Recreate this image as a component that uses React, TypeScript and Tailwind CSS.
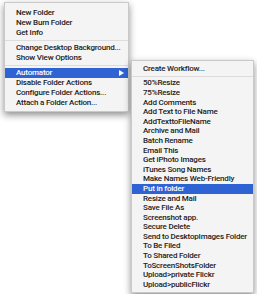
import React from "react";

type Item = { label?: string; sep?: boolean; active?: boolean; arrow?: boolean };

const mainItems: Item[] = [
  { label: "New Folder" },
  { label: "New Burn Folder" },
  { label: "Get Info" },
  { sep: true },
  { label: "Change Desktop Background..." },
  { label: "Show View Options" },
  { sep: true },
  { label: "Automator", active: true, arrow: true },
  { label: "Disable Folder Actions" },
  { label: "Configure Folder Actions..." },
  { label: "Attach a Folder Action..." },
];

const subItems: Item[] = [
  { label: "Create Workflow..." },
  { sep: true },
  { label: "50%Resize" },
  { label: "75%Resize" },
  { label: "Add Comments" },
  { label: "Add Text to File Name" },
  { label: "AddTexttoFileName" },
  { label: "Archive and Mail" },
  { label: "Batch Rename" },
  { label: "Email This" },
  { label: "Get iPhoto Images" },
  { label: "iTunes Song Names" },
  { label: "Make Names Web-Friendly" },
  { label: "Put in folder", active: true },
  { label: "Resize and Mail" },
  { label: "Save File As" },
  { label: "Screenshot app." },
  { label: "Secure Delete" },
  { label: "Send to DesktopImages Folder" },
  { label: "To Be Filed" },
  { label: "To Shared Folder" },
  { label: "ToScreenShotsFolder" },
  { label: "Upload>private Flickr" },
  { label: "Upload>publicFlickr" },
];

function Menu({ items, rowH, sepClass, className }: { items: Item[]; rowH: string; sepClass: string; className: string }) {
  return (
    <div className={"bg-[#f4f4f4] border border-[#c9c9c9] shadow-[0_3px_7px_rgba(0,0,0,0.45)] " + className}>
      {items.map((it, i) =>
        it.sep ? (
          <div key={i} className={"flex items-center " + sepClass}>
            <div className="h-px w-full bg-[#dcdcdc]" />
          </div>
        ) : (
          <div
            key={i}
            className={
              "flex items-center justify-between pl-[11px] pr-[4px] whitespace-nowrap " +
              rowH +
              (it.active ? " bg-[#2f63d3] text-white" : " text-[#222]")
            }
          >
            <span>{it.label}</span>
            {it.arrow && (
              <svg width="5" height="6" viewBox="0 0 5 6">
                <path d="M0 0 L5 3 L0 6 Z" fill="#fff" />
              </svg>
            )}
          </div>
        )
      )}
    </div>
  );
}

export default function App() {
  return (
    <div
      className="w-[257px] h-[294px] bg-white flex items-start pl-[4px] pt-[2px] text-[8px] font-medium tracking-[-0.2px] overflow-hidden"
      style={{ fontFamily: 'Roboto, "Liberation Sans", Arial, sans-serif' }}
    >
      <Menu items={mainItems} rowH="h-[10px]" sepClass="h-[5px]" className="w-[125px] pt-[5px] pb-[3px] shrink-0" />
      <Menu items={subItems} rowH="h-[9.6px]" sepClass="h-[5px]" className="w-[123px] mt-[58px] ml-[2px] pt-[3px] pb-[2px] shrink-0" />
    </div>
  );
}
